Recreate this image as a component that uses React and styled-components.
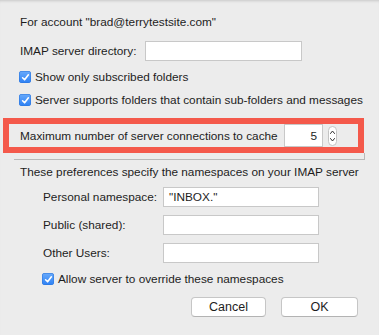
import React from 'react';
import styled, { createGlobalStyle } from 'styled-components';

const Global = createGlobalStyle`
  html, body { margin: 0; padding: 0; background: #ececec; }
  body {
    font-family: "Liberation Sans", Arial, sans-serif;
    font-size: 11.8px;
    color: #1d1d1d;
  }
`;

const Dialog = styled.div`
  width: 379px;
  height: 335px;
  box-sizing: border-box;
  background: #ececec;
  box-shadow: inset 0 3px 3px -2px rgba(0, 0, 0, 0.16);
  padding-top: 14px;
  display: flex;
  flex-direction: column;
  overflow: hidden;
`;

const TextLine = styled.div`
  height: 16px;
  line-height: 16px;
  padding-left: 20px;
  margin-top: ${(p) => p.$mt || 0}px;
  white-space: nowrap;
`;

const FieldRow = styled.div`
  display: flex;
  align-items: center;
  height: 20px;
  padding-left: ${(p) => p.$indent}px;
  margin-top: ${(p) => p.$mt || 0}px;
`;

const Label = styled.span`
  width: ${(p) => p.$w}px;
  flex: none;
  white-space: nowrap;
`;

const Input = styled.div`
  box-sizing: border-box;
  flex: none;
  width: ${(p) => p.$w}px;
  height: ${(p) => p.$h || 20}px;
  background: #fff;
  border: 1px solid #c8c8c8;
  display: flex;
  align-items: center;
  justify-content: ${(p) => (p.$right ? 'flex-end' : 'flex-start')};
  padding: 0 5px;
  white-space: nowrap;
`;

const CheckRow = styled.label`
  display: flex;
  align-items: center;
  gap: 4px;
  height: 16px;
  padding-left: ${(p) => p.$indent}px;
  margin-top: ${(p) => p.$mt || 0}px;
  white-space: nowrap;
`;

const Box = styled.span`
  width: 12px;
  height: 12px;
  flex: none;
  border-radius: 3px;
  background: linear-gradient(#6aabfb, #2c80f4);
  box-shadow: inset 0 0 0 0.5px #2a74da;
  display: flex;
  align-items: center;
  justify-content: center;
`;

const Highlight = styled.div`
  box-sizing: border-box;
  margin: 10px 0 0 3px;
  width: 361px;
  height: 35px;
  border: 6px solid #f4594b;
  display: flex;
  align-items: center;
  padding: 0 21px 0 11px;
`;

const Grow = styled.span`
  flex: 1;
  white-space: nowrap;
`;

const Stepper = styled.span`
  flex: none;
  margin-left: 5px;
  width: 9px;
  height: 20px;
  box-sizing: border-box;
  border: 1px solid #c4c4c4;
  border-radius: 5px;
  background: #fff;
  display: flex;
  align-items: center;
  justify-content: center;
`;

const Separator = styled.div`
  box-sizing: border-box;
  margin-left: 14px;
  width: 351px;
  height: 7px;
  border-right: 1px solid #b9b9b9;
  border-bottom: 1px solid #b9b9b9;
`;

const NamespaceList = styled.div`
  display: flex;
  flex-direction: column;
  gap: 8px;
  margin-top: 7px;
`;

const Buttons = styled.div`
  display: flex;
  justify-content: flex-end;
  gap: 15px;
  padding-right: 21px;
  margin-top: 10px;
`;

const Button = styled.button`
  box-sizing: border-box;
  width: ${(p) => p.$w}px;
  height: 20px;
  background: #fff;
  border: 1px solid #c6c6c6;
  border-bottom-color: #b3b3b3;
  border-radius: 4px;
  font-family: inherit;
  font-size: 12.5px;
  color: #1d1d1d;
  padding: 0;
  line-height: 18px;
`;

const Check = () => (
  <Box>
    <svg width="9" height="9" viewBox="0 0 9 9">
      <path d="M1.6 4.8 L3.6 6.8 L7.4 1.8" fill="none" stroke="#fff" strokeWidth="1.6" strokeLinecap="round" strokeLinejoin="round" />
    </svg>
  </Box>
);

const Arrows = () => (
  <Stepper>
    <svg width="7" height="16" viewBox="0 0 7 16">
      <path d="M1.5 5.5 L3.5 3 L5.5 5.5" fill="none" stroke="#333" strokeWidth="1" strokeLinecap="round" strokeLinejoin="round" />
      <path d="M1.5 10.5 L3.5 13 L5.5 10.5" fill="none" stroke="#333" strokeWidth="1" strokeLinecap="round" strokeLinejoin="round" />
    </svg>
  </Stepper>
);

export default function App() {
  return (
    <>
      <Global />
      <Dialog>
        <TextLine>For account "brad@terrytestsite.com"</TextLine>
        <FieldRow $indent={20} $mt={11}>
          <Label $w={125}>IMAP server directory:</Label>
          <Input $w={157} />
        </FieldRow>
        <CheckRow $indent={19} $mt={8}>
          <Check />
          Show only subscribed folders
        </CheckRow>
        <CheckRow $indent={19} $mt={7}>
          <Check />
          Server supports folders that contain sub-folders and messages
        </CheckRow>
        <Highlight>
          <Grow>Maximum number of server connections to cache</Grow>
          <Input $w={39} $h={23} $right>5</Input>
          <Arrows />
        </Highlight>
        <Separator />
        <TextLine $mt={4}>These preferences specify the namespaces on your IMAP server</TextLine>
        <NamespaceList>
          <FieldRow $indent={43}>
            <Label $w={120}>Personal namespace:</Label>
            <Input $w={156}>"INBOX."</Input>
          </FieldRow>
          <FieldRow $indent={43}>
            <Label $w={120}>Public (shared):</Label>
            <Input $w={156} />
          </FieldRow>
          <FieldRow $indent={43}>
            <Label $w={120}>Other Users:</Label>
            <Input $w={156} />
          </FieldRow>
        </NamespaceList>
        <CheckRow $indent={42} $mt={8}>
          <Check />
          Allow server to override these namespaces
        </CheckRow>
        <Buttons>
          <Button $w={75}>Cancel</Button>
          <Button $w={77}>OK</Button>
        </Buttons>
      </Dialog>
    </>
  );
}
